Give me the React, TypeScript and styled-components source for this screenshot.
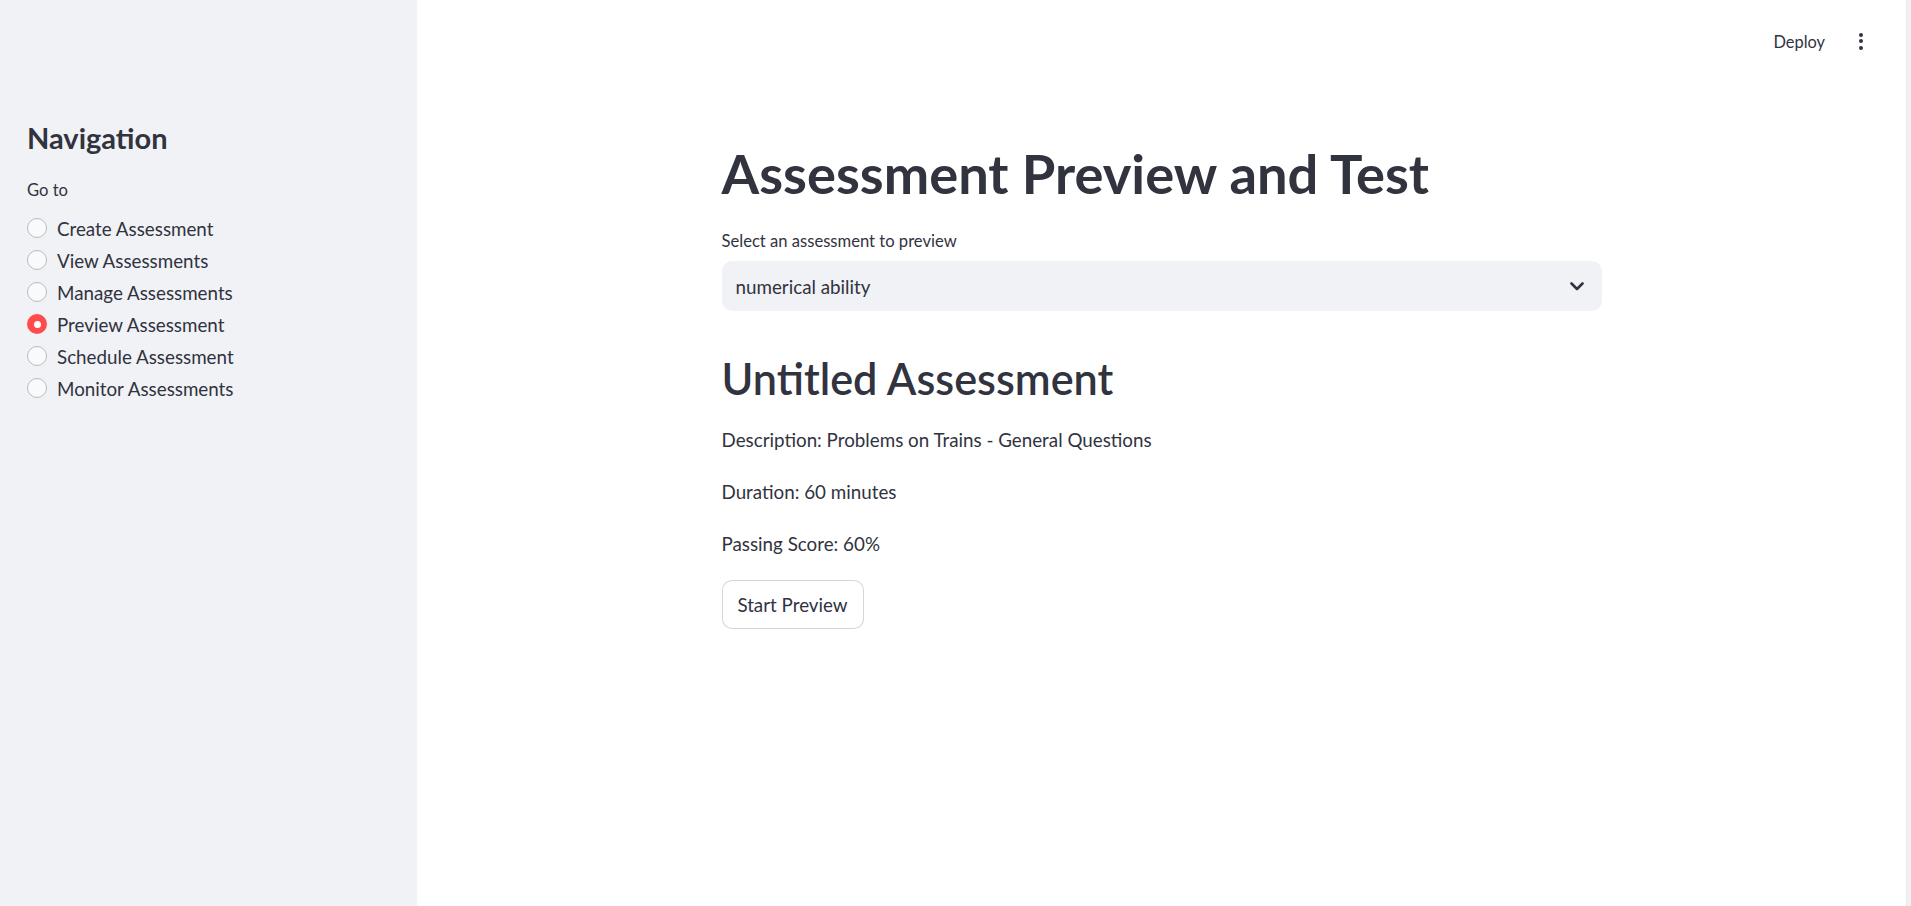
import React from "react";
import styled, { createGlobalStyle } from "styled-components";

const Global = createGlobalStyle`
  html, body { margin: 0; padding: 0; background: #ffffff; }
  body { font-family: Lato, "Noto Sans", sans-serif; color: #31333f; }
  * { box-sizing: border-box; }
`;

const Shell = styled.div`
  display: flex;
  width: 1911px;
  height: 906px;
  overflow: hidden;
`;

const Sidebar = styled.aside`
  width: 417px;
  flex: none;
  background: #f0f2f6;
  padding: 120px 27px 0 27px;
  display: flex;
  flex-direction: column;
`;

const SideTitle = styled.h1`
  margin: 0;
  font-size: 29px;
  line-height: 35px;
  font-weight: 700;
  color: #31333f;
`;

const FieldLabel = styled.div<{ $gap: number }>`
  margin-top: ${(p) => p.$gap}px;
  font-size: 16.6px;
  line-height: 22px;
  color: #31333f;
`;

const RadioList = styled.div`
  margin-top: 11px;
  display: flex;
  flex-direction: column;
`;

const RadioRow = styled.label`
  display: flex;
  align-items: center;
  height: 32px;
  gap: 10px;
  font-size: 18.8px;
  color: #31333f;
`;

const RadioCircle = styled.span<{ $on: boolean }>`
  width: 20px;
  height: 20px;
  border-radius: 50%;
  flex: none;
  background: ${(p) => (p.$on ? "#ff4b4b" : "#f9fafb")};
  border: ${(p) => (p.$on ? "none" : "1px solid #b8bac2")};
  display: flex;
  align-items: center;
  justify-content: center;
  &::after {
    content: "";
    display: ${(p) => (p.$on ? "block" : "none")};
    width: 7px;
    height: 7px;
    border-radius: 50%;
    background: #ffffff;
  }
`;

const Main = styled.main`
  flex: 1;
  display: flex;
  flex-direction: column;
  min-width: 0;
`;

const Header = styled.header`
  height: 82px;
  display: flex;
  align-items: center;
  justify-content: flex-end;
  padding-right: 43px;
  gap: 34px;
`;

const DeployButton = styled.span`
  font-size: 16.4px;
  color: #31333f;
`;

const MenuDots = styled.span`
  display: flex;
  flex-direction: column;
  gap: 2.5px;
  & > i {
    width: 4px;
    height: 4px;
    border-radius: 50%;
    background: #31333f;
    display: block;
  }
`;

const Content = styled.section`
  width: 880px;
  margin: 58px auto 0 auto;
  display: flex;
  flex-direction: column;
`;

const Title = styled.h1`
  margin: 0;
  font-size: 54.3px;
  line-height: 66px;
  font-weight: 700;
  color: #31333f;
`;

const Select = styled.div`
  margin-top: 9px;
  height: 50px;
  border-radius: 10px;
  background: #f0f2f6;
  display: flex;
  align-items: center;
  justify-content: space-between;
  padding: 0 18px 0 14px;
  font-size: 18.8px;
  color: #31333f;
`;

const SubTitle = styled.h2`
  margin: 40px 0 0 0;
  font-size: 43.2px;
  line-height: 54px;
  font-weight: 600;
  color: #31333f;
`;

const Paragraphs = styled.div`
  margin-top: 19px;
  display: flex;
  flex-direction: column;
`;

const Para = styled.p`
  margin: 0 0 20px 0;
  font-size: 18.8px;
  line-height: 32px;
  color: #31333f;
`;

const Button = styled.button`
  align-self: flex-start;
  margin-top: 0;
  height: 49px;
  width: 142px;
  border: 1px solid rgba(49, 51, 63, 0.2);
  border-radius: 10px;
  background: #ffffff;
  font-family: inherit;
  font-size: 18.8px;
  color: #31333f;
  padding: 0;
`;

const ScrollTrack = styled.div`
  width: 5px;
  flex: none;
  background: #f1f1f1;
  border-left: 1px solid #e8e8e8;
`;

const navItems = [
  "Create Assessment",
  "View Assessments",
  "Manage Assessments",
  "Preview Assessment",
  "Schedule Assessment",
  "Monitor Assessments",
];

export default function App() {
  return (
    <>
      <Global />
      <Shell>
        <Sidebar>
          <SideTitle>Navigation</SideTitle>
          <FieldLabel $gap={24}>Go to</FieldLabel>
          <RadioList>
            {navItems.map((n) => (
              <RadioRow key={n}>
                <RadioCircle $on={n === "Preview Assessment"} />
                {n}
              </RadioRow>
            ))}
          </RadioList>
        </Sidebar>
        <Main>
          <Header>
            <DeployButton>Deploy</DeployButton>
            <MenuDots>
              <i />
              <i />
              <i />
            </MenuDots>
          </Header>
          <Content>
            <Title>Assessment Preview and Test</Title>
            <FieldLabel $gap={24}>Select an assessment to preview</FieldLabel>
            <Select>
              <span>numerical ability</span>
              <svg width="14" height="9" viewBox="0 0 14 9" fill="none">
                <path d="M1.5 1.5 L7 7 L12.5 1.5" stroke="#31333f" strokeWidth="2.6" strokeLinecap="round" strokeLinejoin="round" />
              </svg>
            </Select>
            <SubTitle>Untitled Assessment</SubTitle>
            <Paragraphs>
              <Para>Description: Problems on Trains - General Questions</Para>
              <Para>Duration: 60 minutes</Para>
              <Para>Passing Score: 60%</Para>
            </Paragraphs>
            <Button>Start Preview</Button>
          </Content>
        </Main>
        <ScrollTrack />
      </Shell>
    </>
  );
}
